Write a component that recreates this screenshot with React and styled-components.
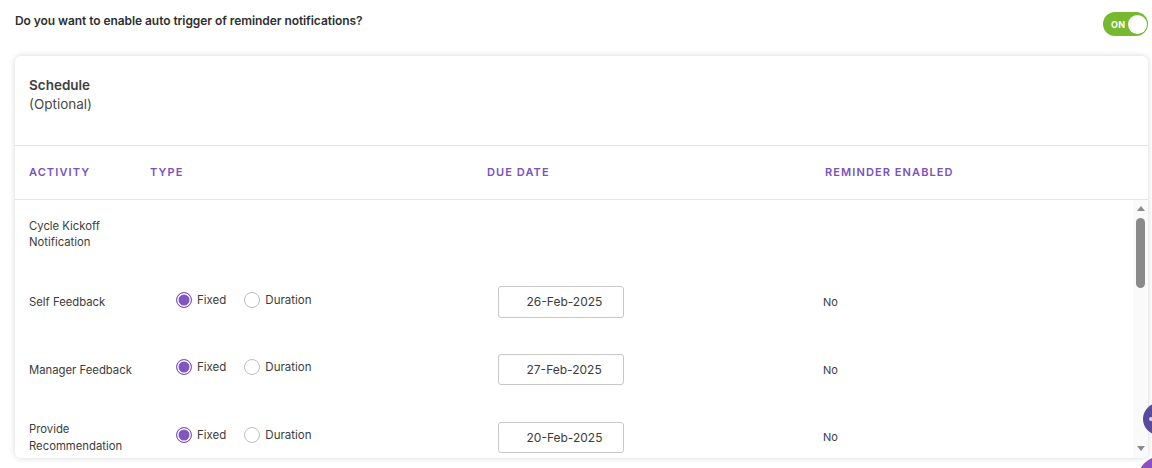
import styled, { createGlobalStyle } from 'styled-components';

const filas = [
  { id: 1, nombre: ['Cycle Kickoff', 'Notification'] },
  { id: 2, nombre: ['Self Feedback'], fecha: '26-Feb-2025' },
  { id: 3, nombre: ['Manager Feedback'], fecha: '27-Feb-2025' },
  { id: 4, nombre: ['Provide', 'Recommendation'], fecha: '20-Feb-2025' },
];

const App = () => {
  return (
    <>
      <Global />
      <Pagina>
        <Cabecera>
          <Pregunta>Do you want to enable auto trigger of reminder notifications?</Pregunta>
          <Toggle>
            <ToggleTexto>ON</ToggleTexto>
            <ToggleBola />
          </Toggle>
        </Cabecera>

        <Tarjeta>
          <TarjetaTitulo>
            <Titulo>Schedule</Titulo>
            <Subtitulo>(Optional)</Subtitulo>
          </TarjetaTitulo>

          <TablaCabecera>
            <Columna>ACTIVITY</Columna>
            <Columna>TYPE</Columna>
            <Columna>DUE DATE</Columna>
            <Columna>REMINDER ENABLED</Columna>
          </TablaCabecera>

          <TablaCuerpo>
            <Filas>
              {filas.map((fila) => (
                <Fila key={fila.id}>
                  <Actividad>
                    {fila.nombre.map((linea) => (
                      <span key={linea}>{linea}</span>
                    ))}
                  </Actividad>
                  {fila.fecha && (
                    <>
                      <Radios>
                        <Opcion>
                          <Radio $activo />
                          Fixed
                        </Opcion>
                        <Opcion>
                          <Radio />
                          Duration
                        </Opcion>
                      </Radios>
                      <Fecha>{fila.fecha}</Fecha>
                      <Recordatorio>No</Recordatorio>
                    </>
                  )}
                </Fila>
              ))}
            </Filas>
            <Scroll>
              <Flecha />
              <Barra />
              <Hueco />
              <Flecha $abajo />
            </Scroll>
          </TablaCuerpo>
        </Tarjeta>

        <BotonFlotante />
        <BotonAyuda />
      </Pagina>
    </>
  );
};

const Global = createGlobalStyle`
  html, body {
    margin: 0;
    padding: 0;
    background: #fff;
  }
  * {
    box-sizing: border-box;
  }
`;

const Pagina = styled.div`
  position: relative;
  width: 1152px;
  height: 468px;
  overflow: hidden;
  padding: 0 4px 0 15px;
  background: #fff;
  font-family: Inter, 'Noto Sans', sans-serif;
  color: #3c3c3c;
`;

const Cabecera = styled.div`
  display: flex;
  justify-content: space-between;
  height: 56px;
  padding-top: 12px;
`;

const Pregunta = styled.div`
  margin-top: 2px;
  font-size: 12px;
  line-height: 14px;
  font-weight: 600;
  letter-spacing: -0.07px;
  color: #2f2f2f;
`;

const Toggle = styled.div`
  display: flex;
  align-items: center;
  justify-content: space-between;
  width: 45px;
  height: 24px;
  padding: 0 1px 0 8px;
  border-radius: 12px;
  background: #76b82f;
`;

const ToggleTexto = styled.span`
  font-size: 9px;
  font-weight: 700;
  letter-spacing: 0.2px;
  color: #fff;
`;

const ToggleBola = styled.span`
  width: 19px;
  height: 19px;
  border-radius: 50%;
  background: #fff;
`;

const Tarjeta = styled.div`
  height: 402px;
  border-radius: 6px;
  background: #fff;
  box-shadow: 0 0 6px rgba(0, 0, 0, 0.16);
  overflow: hidden;
`;

const TarjetaTitulo = styled.div`
  height: 90px;
  padding: 20px 14px 0;
  border-bottom: 1px solid #e4e4e4;
`;

const Titulo = styled.div`
  font-size: 13.5px;
  line-height: 18px;
  font-weight: 600;
  color: #3f3f3f;
`;

const Subtitulo = styled.div`
  font-size: 13.5px;
  line-height: 20px;
  color: #4a4a4a;
`;

const TablaCabecera = styled.div`
  display: grid;
  grid-template-columns: 121px 337px 338px 1fr;
  align-items: center;
  height: 54px;
  padding: 0 0 2px 14px;
  border-bottom: 1px solid #e4e4e4;
`;

const Columna = styled.div`
  font-size: 11px;
  font-weight: 600;
  letter-spacing: 1.1px;
  color: #7a52c0;
`;

const TablaCuerpo = styled.div`
  display: flex;
  height: 258px;
`;

const Filas = styled.div`
  flex: 1;
  overflow: hidden;
`;

const Fila = styled.div`
  display: grid;
  grid-template-columns: 147px 322px 325px 1fr;
  align-items: center;
  height: 67.8px;
  padding-left: 14px;
  font-size: 11.3px;
  color: #3c3c3c;
`;

const Actividad = styled.div`
  display: flex;
  flex-direction: column;
  margin-top: 1.2px;
  line-height: 16.5px;
`;

const Radios = styled.div`
  display: flex;
  gap: 18px;
  margin-bottom: 4px;
`;

const Opcion = styled.label`
  display: flex;
  align-items: center;
  gap: 5px;
  font-size: 11.5px;
`;

const Radio = styled.span`
  width: 16px;
  height: 16px;
  border-radius: 50%;
  border: 1px solid ${(props) => (props.$activo ? '#7e57c2' : '#bdbdbd')};
  background: ${(props) => (props.$activo ? '#7e57c2' : '#fff')};
  box-shadow: ${(props) => (props.$activo ? 'inset 0 0 0 1.5px #fff' : 'none')};
`;

const Fecha = styled.div`
  width: 126px;
  height: 31.6px;
  margin-top: 0.4px;
  padding-left: 27.5px;
  border: 1px solid #c8c8c8;
  border-radius: 3px;
  font-size: 12px;
  line-height: 30px;
`;

const Recordatorio = styled.div`
  margin-top: 0.4px;
  font-size: 11px;
`;

const Scroll = styled.div`
  display: flex;
  flex-direction: column;
  align-items: center;
  width: 15px;
  padding: 6px 0 7px;
  background: #fafafa;
`;

const Flecha = styled.span`
  width: 0;
  height: 0;
  border-left: 4.5px solid transparent;
  border-right: 4.5px solid transparent;
  border-${(props) => (props.$abajo ? 'top' : 'bottom')}: 5px solid #8a8a8a;
`;

const Barra = styled.div`
  width: 9px;
  height: 70px;
  margin-top: 7px;
  border-radius: 5px;
  background: #8a8a8a;
`;

const Hueco = styled.div`
  flex: 1;
`;

const BotonFlotante = styled.div`
  position: absolute;
  left: 1143px;
  top: 403px;
  width: 32px;
  height: 32px;
  border-radius: 50%;
  background: #5a4a9e;

  &::before {
    content: '';
    position: absolute;
    left: 6px;
    top: 14px;
    width: 4px;
    height: 4px;
    border-radius: 50%;
    background: #d9d5ea;
  }
`;

const BotonAyuda = styled.div`
  position: absolute;
  left: 1137px;
  top: 456px;
  width: 50px;
  height: 50px;
  border-radius: 50%;
  background: #8e4fc1;
`;

export default App;
